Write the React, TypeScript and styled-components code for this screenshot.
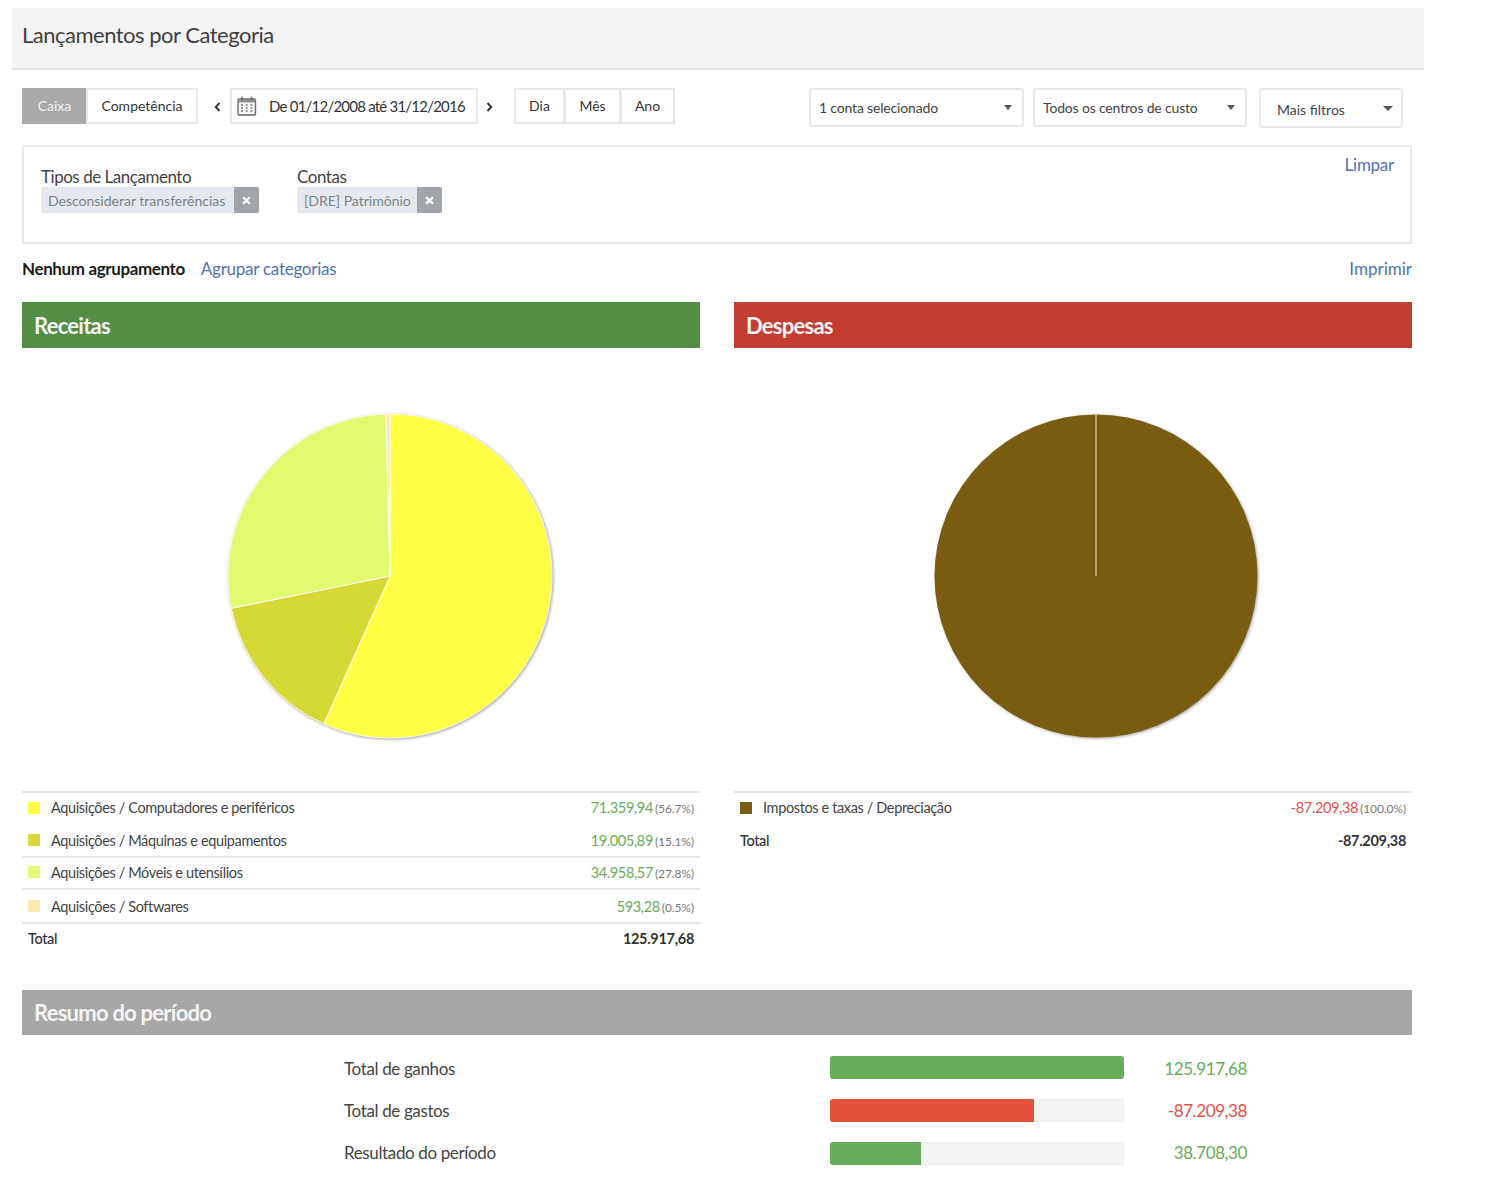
import React from "react";
import styled, { createGlobalStyle } from "styled-components";

const Global = createGlobalStyle`
  html, body { margin: 0; padding: 0; background: #fff; }
  body { font-family: Lato, "Open Sans", "Liberation Sans", sans-serif; color: #444; }
  * { box-sizing: border-box; }
`;

const Page = styled.div`
  width: 1424px;
  height: 1188px;
  padding: 8px 0 0 12px;
  overflow: hidden;
`;
const TitleBar = styled.header`
  height: 62px;
  background: #f4f4f4;
  border-bottom: 2px solid #e3e3e3;
  padding: 0 10px;
  display: flex;
  align-items: center;
`;
const Title = styled.h1`
  margin: 0 0 8px;
  font-size: 22px;
  font-weight: 400;
  letter-spacing: -0.5px;
  color: #3f3f3f;
`;
const Content = styled.main`
  padding: 0 0 0 10px;
  width: 1400px;
`;
const Toolbar = styled.div`
  margin-top: 18px;
  height: 40px;
  display: flex;
  align-items: flex-start;
`;
const ButtonGroup = styled.div`
  display: flex;
  height: 36px;
`;
const ToggleButton = styled.button<{ $active?: boolean; $w: number }>`
  width: ${(p) => p.$w}px;
  height: 36px;
  padding: 0 0 2px;
  margin-left: ${(p) => (p.$active ? 0 : -1)}px;
  border: 2px solid ${(p) => (p.$active ? "#a9a9a9" : "#e6e8ea")};
  background: ${(p) => (p.$active ? "#a9a9a9" : "#fff")};
  color: ${(p) => (p.$active ? "#f2f2f2" : "#333")};
  font: 400 14px Lato, sans-serif;
  letter-spacing: 0;
`;
const Arrow = styled.span<{ $w: number; $shift?: number }>`
  width: ${(p) => p.$w}px;
  height: 36px;
  display: flex;
  align-items: center;
  justify-content: center;
  padding: 1px 0 0 ${(p) => p.$shift ?? 0}px;
`;
const DateBox = styled.div`
  width: 248px;
  height: 36px;
  border: 2px solid #e6e8ea;
  display: flex;
  align-items: center;
  padding-left: 5px;
  gap: 12px;
  font-size: 15px;
  letter-spacing: -0.78px;
  color: #333;
`;
const UnitGroup = styled(ButtonGroup)`
  margin-left: 14px;
`;
const Selects = styled.div`
  margin-left: 134px;
  display: flex;
  gap: 9px;
`;
const Select = styled.div<{ $w: number; $h: number; $pad: number }>`
  width: ${(p) => p.$w}px;
  height: ${(p) => p.$h}px;
  border: 2px solid #e6e8ea;
  border-radius: 3px;
  display: flex;
  align-items: center;
  justify-content: space-between;
  padding: 0 ${(p) => (p.$pad > 12 ? 8 : 10)}px 0 ${(p) => p.$pad}px;
  font-size: 14px;
  letter-spacing: -0.17px;
  color: #444;
`;
const MoreFilters = styled(Select)`
  margin-left: 3px;
  letter-spacing: 0;
`;
const SelectLabel = styled.span<{ $down?: number }>`
  padding-top: ${(p) => p.$down ?? 0}px;
`;
const Caret = styled.i<{ $big?: boolean }>`
  width: 0;
  height: 0;
  border-left: ${(p) => (p.$big ? 5 : 4)}px solid transparent;
  border-right: ${(p) => (p.$big ? 5 : 4)}px solid transparent;
  border-top: 5px solid #555;
`;
const FilterBox = styled.section`
  margin-top: 17px;
  height: 99px;
  width: 1390px;
  border: 2px solid #e9e9e9;
  padding: 20px 16px 0 17px;
  display: flex;
  justify-content: space-between;
  align-items: flex-start;
`;
const FilterGroups = styled.div`
  display: flex;
  gap: 38px;
`;
const FilterGroup = styled.div`
  display: flex;
  flex-direction: column;
  gap: 1px;
`;
const FilterLabel = styled.span`
  font-size: 17px;
  line-height: 19px;
  letter-spacing: -0.47px;
  color: #444;
`;
const Chip = styled.div<{ $w: number }>`
  display: flex;
  width: ${(p) => p.$w}px;
  height: 26px;
  background: #e5e8ec;
  border-radius: 2px;
  overflow: hidden;
  align-items: center;
  font-size: 14px;
  color: #7a8490;
`;
const ChipText = styled.span`
  flex: 1;
  padding-left: 7px;
  white-space: nowrap;
`;
const ChipRemove = styled.span`
  width: 25px;
  height: 26px;
  background: #a1a4a8;
  display: flex;
  align-items: center;
  justify-content: center;
`;
const Link = styled.a`
  color: #4f74b3;
  font-size: 17px;
  letter-spacing: -0.26px;
`;
const ClearLink = styled(Link)`
  margin-top: -13px;
`;
const GroupRow = styled.div`
  margin-top: 13px;
  width: 1390px;
  height: 22px;
  display: flex;
  align-items: center;
  font-size: 17px;
`;
const GroupLabel = styled.strong`
  font-weight: 700;
  letter-spacing: -0.38px;
  color: #1c1c1c;
  margin-right: 16px;
`;
const PrintLink = styled(Link)`
  margin-left: auto;
  letter-spacing: 0;
`;
const Panels = styled.div`
  margin-top: 23px;
  width: 1390px;
  display: grid;
  grid-template-columns: 678px 678px;
  column-gap: 34px;
`;
const SectionBar = styled.h2<{ $bg: string; $h: number }>`
  margin: 0;
  height: ${(p) => p.$h}px;
  background: ${(p) => p.$bg};
  color: #f3f3f3;
  display: flex;
  align-items: center;
  padding-left: 12px;
  font-size: 22px;
  font-weight: 700;
  letter-spacing: -0.75px;
`;
const ChartArea = styled.div<{ $left: number }>`
  height: 443px;
  padding: 58px 0 0 ${(p) => p.$left}px;
`;
const PieSvg = styled.svg`
  display: block;
  overflow: visible;
  filter: drop-shadow(1px 1px 1.5px rgba(0, 0, 0, 0.36));
`;
const Legend = styled.div`
  display: flex;
  flex-direction: column;
`;
const LegendRow = styled.div<{ $h: number; $line?: boolean; $bottom?: number }>`
  height: ${(p) => p.$h}px;
  border-top: 2px solid ${(p) => (p.$line ? "#e6e6e6" : "transparent")};
  padding: 0 6px ${(p) => p.$bottom ?? 2}px;
  display: flex;
  align-items: center;
  font-size: 14.5px;
  letter-spacing: -0.37px;
  color: #444;
`;
const Swatch = styled.i<{ $c: string }>`
  width: 12px;
  height: 12px;
  margin-right: 11px;
  background: ${(p) => p.$c};
`;
const Value = styled.span<{ $c: string }>`
  margin-left: auto;
  color: ${(p) => p.$c};
`;
const Percent = styled.small`
  font-size: 12px;
  letter-spacing: -0.1px;
  color: #777;
  margin-left: 2px;
`;
const TotalLabel = styled.span`
  color: #333;
  font-weight: 500;
`;
const TotalValue = styled.span`
  margin-left: auto;
  color: #333;
  font-weight: 700;
  letter-spacing: -0.3px;
`;
const Summary = styled.section`
  margin-top: 36px;
  width: 1390px;
`;
const SummaryRows = styled.div`
  padding: 21px 0 0 322px;
`;
const SummaryRow = styled.div`
  height: 43px;
  display: grid;
  grid-template-columns: 486px 294px 123px;
  align-items: start;
  font-size: 17px;
`;
const SummaryLabel = styled.span<{ $lift: number }>`
  line-height: 26px;
  margin-top: ${(p) => -p.$lift}px;
  letter-spacing: -0.37px;
  color: #444;
`;
const Bar = styled.div`
  height: 23px;
  background: #f4f4f4;
  border-radius: 3px;
  overflow: hidden;
  box-shadow: inset 0 0 0 1px #ededed;
`;
const BarFill = styled.div<{ $c: string }>`
  height: 100%;
  background: ${(p) => p.$c};
`;
const SummaryValue = styled.span<{ $c: string; $lift: number }>`
  line-height: 26px;
  margin-top: ${(p) => -p.$lift}px;
  text-align: right;
  color: ${(p) => p.$c};
  font-size: 17px;
  letter-spacing: -0.4px;
`;

const GREEN = "#68ad5a";
const RED = "#e8504a";

const pt = (frac: number, r: number) => {
  const a = frac * 2 * Math.PI;
  return `${(170 + r * Math.sin(a)).toFixed(2)} ${(170 - r * Math.cos(a)).toFixed(2)}`;
};

function Pie({ slices, r }: { slices: { v: number; c: string }[]; r: number }) {
  let acc = 0;
  return (
    <PieSvg width={340} height={340} viewBox="0 0 340 340">
      <circle cx={170} cy={170} r={r} fill={slices[0].c} />
      {slices.length === 1 ? (
        <line x1={170} y1={170} x2={170} y2={170 - r} stroke="#f0ecdc" strokeWidth={1} />
      ) : (
        slices.map((s) => {
          const start = acc;
          acc += s.v;
          const d = `M170 170 L${pt(start, r)} A${r} ${r} 0 ${s.v > 0.5 ? 1 : 0} 1 ${pt(acc, r)} Z`;
          return <path key={s.c} d={d} fill={s.c} stroke="#fbfbf0" strokeWidth={1} strokeLinejoin="round" />;
        })
      )}
    </PieSvg>
  );
}

const Chevron = ({ left }: { left?: boolean }) => (
  <svg width="7" height="10" viewBox="0 0 7 10" fill="none">
    <path d={left ? "M5.5 1 L1.8 5 L5.5 9" : "M1.5 1 L5.2 5 L1.5 9"} stroke="#333" strokeWidth="1.9" />
  </svg>
);

const CalendarIcon = () => (
  <svg width="20" height="20" viewBox="0 0 20 20" fill="none">
    <rect x="1" y="3" width="17.5" height="16" rx="1" stroke="#666" strokeWidth="1.3" fill="#f7f7f7" />
    <rect x="1" y="3" width="17.5" height="3.4" fill="#8a8a8a" />
    <path d="M5 0.8 V4 M14.5 0.8 V4" stroke="#666" strokeWidth="1.6" />
    <path d="M4 9 H6 M8.7 9 H10.7 M13.4 9 H15.4 M4 12 H6 M8.7 12 H10.7 M13.4 12 H15.4 M4 15 H6 M8.7 15 H10.7 M13.4 15 H15.4" stroke="#777" strokeWidth="1.6" />
  </svg>
);

const RemoveIcon = () => (
  <svg width="9" height="9" viewBox="0 0 9 9" fill="none">
    <path d="M1.2 1.2 L7.8 7.8 M7.8 1.2 L1.2 7.8" stroke="#fff" strokeWidth="2.3" />
  </svg>
);

const receitas = [
  { n: "Aquisições / Computadores e periféricos", v: "71.359,94", p: "(56.7%)", c: "#ffff45", f: 0.567, h: 33, line: true, b: 2 },
  { n: "Aquisições / Máquinas e equipamentos", v: "19.005,89", p: "(15.1%)", c: "#d6d836", f: 0.151, h: 32, line: false, b: 2 },
  { n: "Aquisições / Móveis e utensílios", v: "34.958,57", p: "(27.8%)", c: "#e2fa70", f: 0.278, h: 32, line: true, b: 2 },
  { n: "Aquisições / Softwares", v: "593,28", p: "(0.5%)", c: "#fde9b0", f: 0.004, h: 34, line: true, b: 0 },
];

const resumo = [
  { n: "Total de ganhos", v: "125.917,68", w: 100, c: GREEN, t: GREEN, lift: 0 },
  { n: "Total de gastos", v: "-87.209,38", w: 69.3, c: "#e2523b", t: RED, lift: 1 },
  { n: "Resultado do período", v: "38.708,30", w: 30.8, c: GREEN, t: GREEN, lift: 2 },
];

export default function App() {
  return (
    <Page>
      <Global />
      <TitleBar>
        <Title>Lançamentos por Categoria</Title>
      </TitleBar>
      <Content>
        <Toolbar>
          <ButtonGroup>
            <ToggleButton $active $w={65}>Caixa</ToggleButton>
            <ToggleButton $w={112}>Competência</ToggleButton>
          </ButtonGroup>
          <Arrow $w={32} $shift={7}><Chevron left /></Arrow>
          <DateBox>
            <CalendarIcon />
            <span>De 01/12/2008 até 31/12/2016</span>
          </DateBox>
          <Arrow $w={23}><Chevron /></Arrow>
          <UnitGroup>
            <ToggleButton $w={51}>Dia</ToggleButton>
            <ToggleButton $w={57}>Mês</ToggleButton>
            <ToggleButton $w={55}>Ano</ToggleButton>
          </UnitGroup>
          <Selects>
            <Select $w={215} $h={39} $pad={8}>
              <SelectLabel>1 conta selecionado</SelectLabel>
              <Caret />
            </Select>
            <Select $w={214} $h={39} $pad={8}>
              <SelectLabel>Todos os centros de custo</SelectLabel>
              <Caret />
            </Select>
            <MoreFilters $w={144} $h={40} $pad={16}>
              <SelectLabel $down={2}>Mais filtros</SelectLabel>
              <Caret $big />
            </MoreFilters>
          </Selects>
        </Toolbar>

        <FilterBox>
          <FilterGroups>
            <FilterGroup>
              <FilterLabel>Tipos de Lançamento</FilterLabel>
              <Chip $w={218}>
                <ChipText>Desconsiderar transferências</ChipText>
                <ChipRemove><RemoveIcon /></ChipRemove>
              </Chip>
            </FilterGroup>
            <FilterGroup>
              <FilterLabel>Contas</FilterLabel>
              <Chip $w={145}>
                <ChipText>[DRE] Patrimônio</ChipText>
                <ChipRemove><RemoveIcon /></ChipRemove>
              </Chip>
            </FilterGroup>
          </FilterGroups>
          <ClearLink>Limpar</ClearLink>
        </FilterBox>

        <GroupRow>
          <GroupLabel>Nenhum agrupamento</GroupLabel>
          <Link>Agrupar categorias</Link>
          <PrintLink>Imprimir</PrintLink>
        </GroupRow>

        <Panels>
          <section>
            <SectionBar $bg="#538d46" $h={46}>Receitas</SectionBar>
            <ChartArea $left={198}>
              <Pie r={162} slices={receitas.map((r) => ({ v: r.f, c: r.c }))} />
            </ChartArea>
            <Legend>
              {receitas.map((r) => (
                <LegendRow key={r.n} $h={r.h} $line={r.line} $bottom={r.b}>
                  <Swatch $c={r.c} />
                  <span>{r.n}</span>
                  <Value $c={GREEN}>
                    {r.v}
                    <Percent>{r.p}</Percent>
                  </Value>
                </LegendRow>
              ))}
              <LegendRow $h={32} $line>
                <TotalLabel>Total</TotalLabel>
                <TotalValue>125.917,68</TotalValue>
              </LegendRow>
            </Legend>
          </section>
          <section>
            <SectionBar $bg="#c23d33" $h={46}>Despesas</SectionBar>
            <ChartArea $left={192}>
              <Pie r={161.5} slices={[{ v: 1, c: "#7a5c10" }]} />
            </ChartArea>
            <Legend>
              <LegendRow $h={33} $line>
                <Swatch $c="#7a5c10" />
                <span>Impostos e taxas / Depreciação</span>
                <Value $c={RED}>
                  -87.209,38
                  <Percent>(100.0%)</Percent>
                </Value>
              </LegendRow>
              <LegendRow $h={32}>
                <TotalLabel>Total</TotalLabel>
                <TotalValue>-87.209,38</TotalValue>
              </LegendRow>
            </Legend>
          </section>
        </Panels>

        <Summary>
          <SectionBar $bg="#a7a7a7" $h={45}>Resumo do período</SectionBar>
          <SummaryRows>
            {resumo.map((r) => (
              <SummaryRow key={r.n}>
                <SummaryLabel $lift={r.lift}>{r.n}</SummaryLabel>
                <Bar>
                  <BarFill $c={r.c} style={{ width: `${r.w}%` }} />
                </Bar>
                <SummaryValue $c={r.t} $lift={r.lift}>{r.v}</SummaryValue>
              </SummaryRow>
            ))}
          </SummaryRows>
        </Summary>
      </Content>
    </Page>
  );
}
